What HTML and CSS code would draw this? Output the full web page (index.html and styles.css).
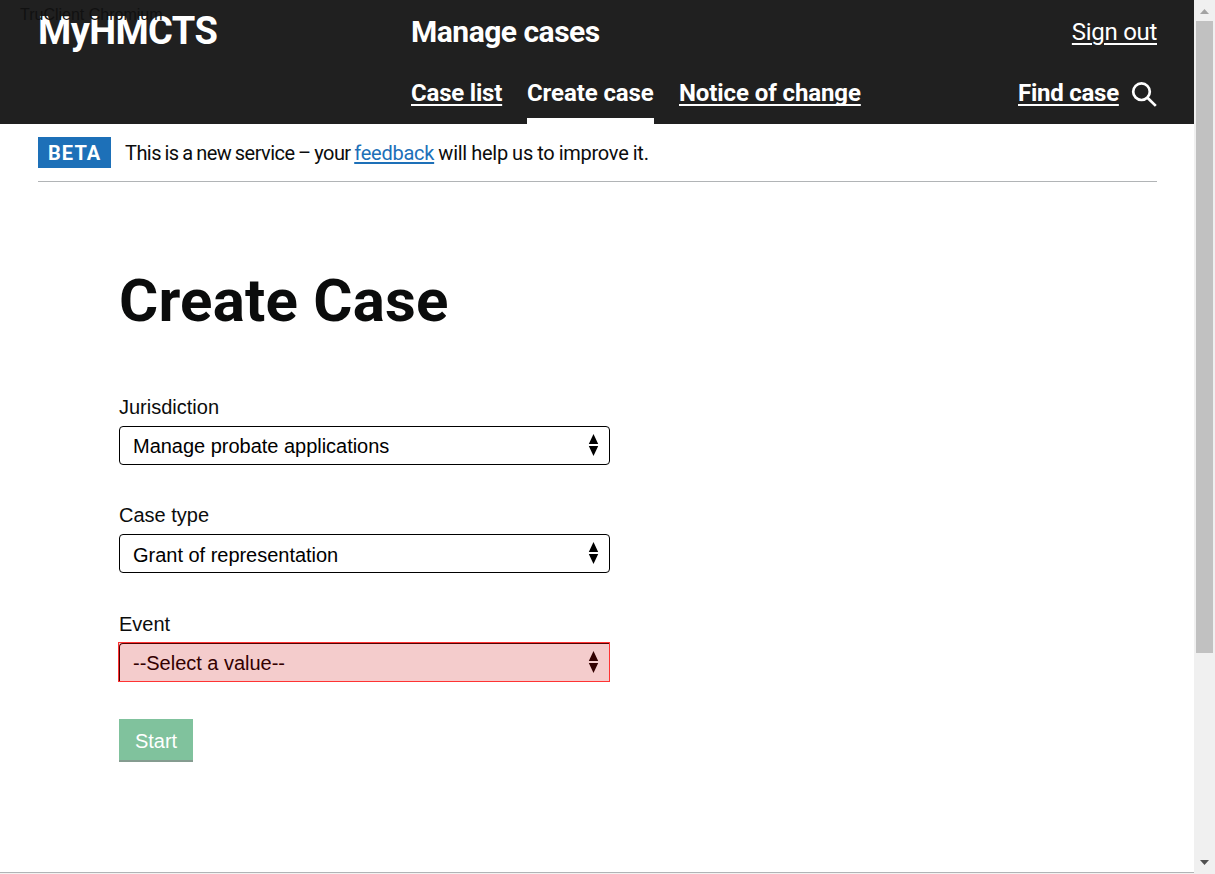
FILE: index.html
```
<!DOCTYPE html>
<html lang="en">
<head>
<meta charset="utf-8">
<title>Create Case - Manage cases</title>
<link rel="stylesheet" href="styles.css">
</head>
<body>
<div class="window">
  <div class="page">
    <header class="header">
      <span class="client-tag">TruClient Chromium</span>
      <div class="logo">MyHMCTS</div>
      <div class="header-content">
        <div class="header-top">
          <span class="service">Manage cases</span>
          <a class="sign-out">Sign out</a>
        </div>
        <nav class="nav">
          <a class="nav-link nav-list">Case list</a>
          <a class="nav-link nav-create active">Create case</a>
          <a class="nav-link nav-notice">Notice of change</a>
          <a class="nav-link nav-find">Find case</a>
          <svg class="search" width="26" height="26" viewBox="0 0 26 26"><circle cx="10.5" cy="9.7" r="8.3"/><path d="M16.2 15.5L24.8 23.9"/></svg>
        </nav>
      </div>
    </header>
    <div class="phase">
      <strong class="beta">BETA</strong>
      <span class="phase-text"><span class="phase-lead">This is a new service – your </span><a class="feedback">feedback</a> will help us to improve it.</span>
    </div>
    <main class="main">
      <h1 class="title"><span>Create Case</span></h1>
      <div class="group">
        <label class="label">Jurisdiction</label>
        <div class="select"><span>Manage probate applications</span><svg class="arrows" width="11" height="22" viewBox="0 0 11 22"><path d="M5.5 0L10.2 10H.8zM.8 12H10.2L5.5 22z"/></svg></div>
      </div>
      <div class="group">
        <label class="label">Case type</label>
        <div class="select case-type"><span>Grant of representation</span><svg class="arrows" width="11" height="22" viewBox="0 0 11 22"><path d="M5.5 0L10.2 10H.8zM.8 12H10.2L5.5 22z"/></svg></div>
      </div>
      <div class="group event">
        <label class="label">Event</label>
        <div class="highlight">
          <div class="select highlighted"><span>--Select a value--</span><svg class="arrows" width="11" height="22" viewBox="0 0 11 22"><path d="M5.5 0L10.2 10H.8zM.8 12H10.2L5.5 22z"/></svg></div>
        </div>
      </div>
      <button class="start">Start</button>
    </main>
    <footer class="footer"></footer>
  </div>
  <div class="scrollbar">
    <svg class="up" width="9" height="5" viewBox="0 0 9 5"><path d="M4.5 0L9 5H0z"/></svg>
    <div class="thumb"></div>
    <svg class="down" width="9" height="5" viewBox="0 0 9 5"><path d="M0 0H9L4.5 5z"/></svg>
  </div>
</div>
</body>
</html>
```
FILE: styles.css
```
* { box-sizing: border-box; }
body { margin: 0; background: #fff; color: #0b0c0c; font-family: Roboto, sans-serif; overflow: hidden; }
.window { display: flex; width: 1215px; height: 874px; }
.page { display: flex; flex-direction: column; width: 1194px; height: 874px; }
.header { position: relative; display: flex; height: 124px; flex: none; padding: 0 37px 0 38px; background: #202020; color: #fff; white-space: nowrap; }
.client-tag { position: absolute; left: 20px; top: 6px; color: #111; font: 16px/18px "Liberation Sans", Arial, sans-serif; }
.logo { width: 373px; padding-top: 11px; font-size: 38px; line-height: 40px; font-weight: 700; letter-spacing: -0.6px; }
.header-content { display: flex; flex: 1; flex-direction: column; }
.header-top { display: flex; justify-content: space-between; height: 62px; padding-top: 12px; line-height: 40px; }
.service { font-size: 30px; font-weight: 700; letter-spacing: -0.5px; }
.sign-out { font-size: 24px; letter-spacing: -0.3px; text-decoration: underline; text-decoration-thickness: 2px; text-underline-offset: 3px; }
.nav { display: flex; height: 62px; }
.nav-link { height: 62px; padding-top: 11px; margin-right: 25px; font-size: 24px; line-height: 40px; font-weight: 700; letter-spacing: -0.1px; text-decoration: underline; text-decoration-thickness: 2px; text-underline-offset: 3px; text-decoration-skip-ink: none; }
.nav-list { width: 91px; letter-spacing: -0.2px; }
.nav-create { width: 127px; }
.active { border-bottom: 6px solid #fff; text-decoration: none; }
.nav-find { width: 101px; margin: 0 12px 0 auto; letter-spacing: -0.25px; }
.search { margin-top: 20px; fill: none; stroke: #fff; stroke-width: 2.7; }
.phase { display: flex; align-items: center; flex: none; height: 58px; margin: 0 37px 0 38px; border-bottom: 1px solid #b1b4b6; font-size: 20px; }
.beta { width: 73px; height: 31px; padding-left: 10px; background: #1d70b8; color: #fff; font-size: 20px; line-height: 32px; letter-spacing: 1.1px; }
.phase-text { margin-left: 14px; padding-top: 1px; line-height: 30px; letter-spacing: -0.25px; word-spacing: -0.5px; white-space: nowrap; }
.phase-lead { letter-spacing: -0.55px; word-spacing: -0.8px; }
.feedback { color: #1d70b8; text-decoration: underline; text-decoration-thickness: 2px; text-underline-offset: 2px; text-decoration-skip-ink: none; }
.main { flex: 1; padding: 84px 0 0 119px; font-family: "Liberation Sans", Arial, sans-serif; }
.title { margin: 0 0 61px; height: 70px; font: 700 60px/70px Roboto, sans-serif; letter-spacing: 0.2px; }
.group { width: 491px; height: 108px; }
.label { display: block; height: 29px; font-size: 20px; line-height: 20px; }
.event { height: 106px; padding-top: 1px; }
.select { display: flex; align-items: center; justify-content: space-between; height: 39px; padding: 1px 10px 0 13px; border: 1px solid #000; border-radius: 4px; color: #000; font-size: 20px; line-height: 24px; letter-spacing: -0.02px; }
.case-type { padding-top: 2px; }
.arrows { margin-top: -2px; fill: currentColor; }
.case-type .arrows { margin-top: -4px; }
.highlight { width: 492px; height: 40px; margin: -1px 0 0 -1px; border: 1px solid #f33; background: #f4cccc; }
.highlighted { height: 38px; border-color: #500; border-right: 0; border-bottom: 0; border-radius: 4px 0 0 0; color: #300; }
.start { display: block; width: 74px; height: 43px; padding: 0; border: 0; background: #80c29d; box-shadow: inset 0 -2px #859c90; color: #fff; font: 20px/45px "Liberation Sans", Arial, sans-serif; }
.footer { height: 2px; flex: none; border-top: 1px solid #b1b4b6; background: #f3f2f1; }
.scrollbar { display: flex; flex-direction: column; align-items: center; width: 21px; height: 874px; background: #f0f0f0; }
.up { margin-top: 9px; fill: #a3a3a3; }
.thumb { width: 17px; height: 632px; margin-top: 7px; background: #c1c1c1; }
.down { margin-top: auto; margin-bottom: 9px; fill: #505050; }
```
